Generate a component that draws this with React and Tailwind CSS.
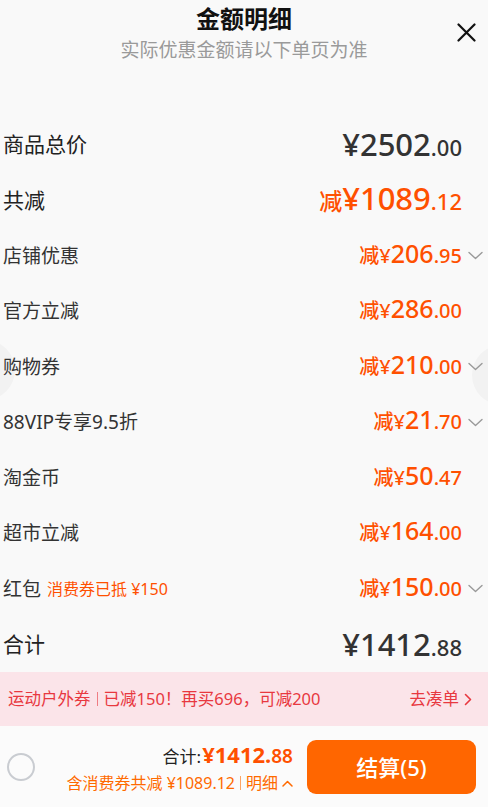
import React from "react";

const FONT = { fontFamily: '"Noto Sans", "Noto Sans CJK SC", sans-serif' };

function Chevron({ className = "" }) {
  return (
    <svg width="15" height="9" viewBox="0 0 15 9" className={className}>
      <polyline points="1,1.5 7.5,7.5 14,1.5" fill="none" stroke="#9a9a9a" strokeWidth="1.4" strokeLinecap="round" strokeLinejoin="round" />
    </svg>
  );
}

function Amount({ minus, int, dec, big, orange }) {
  const color = orange ? "text-[#ff5000]" : "text-[#333333]";
  if (big) {
    return (
      <span className={`flex items-baseline ${color}`}>
        {minus && <span className="text-[23px] font-medium">减</span>}
        <span className="text-[31px] font-medium leading-none">¥{int}</span>
        <span className="text-[22px] font-medium leading-none">.{dec}</span>
      </span>
    );
  }
  return (
    <span className={`flex items-baseline ${color}`}>
      <span className="text-[20px] font-medium">减</span>
      <span className="text-[20px] font-medium leading-none">¥</span>
      <span className="text-[25px] font-medium leading-none">{int}</span>
      <span className="text-[20px] font-medium leading-none">.{dec}</span>
    </span>
  );
}

function Row({ label, extra, amount, chevron, bigLabel }) {
  return (
    <div className="flex h-[55.5px] items-center justify-between pl-[3px]">
      <div className="flex items-center">
        <span className={bigLabel ? "text-[21px] font-normal text-[#222]" : "text-[19px] text-[#333]"}>{label}</span>
        {extra && <span className="ml-[6px] text-[16px] text-[#ff5000]">{extra}</span>}
      </div>
      <div className="flex items-center">
        {amount}
        <div className="flex w-[26px] items-center justify-center">{chevron && <Chevron />}</div>
      </div>
    </div>
  );
}

export default function App() {
  const rows = [
    ["店铺优惠", "206", "95", true],
    ["官方立减", "286", "00", false],
    ["购物券", "210", "00", true],
    ["88VIP专享9.5折", "21", "70", true],
    ["淘金币", "50", "47", false],
    ["超市立减", "164", "00", false],
  ];
  return (
    <div style={FONT} className="relative h-[807px] w-[488px] overflow-hidden bg-[#f9f9f9]">
      <div className="pointer-events-none absolute left-[-45px] top-[340px] h-[60px] w-[60px] rounded-full bg-[#f2f2f2]" />
      <div className="pointer-events-none absolute left-[472px] top-[345px] h-[60px] w-[60px] rounded-full bg-[#f2f2f2]" />

      <div className="relative flex h-[117px] flex-col items-center">
        <div className="mt-[3px] text-[24px] font-bold leading-[32px] text-[#111]">金额明细</div>
        <div className="mt-[1px] text-[19px] leading-[28px] text-[#9a9a9a]">实际优惠金额请以下单页为准</div>
        <svg className="absolute left-[457px] top-[23px]" width="19" height="19" viewBox="0 0 19 19">
          <path d="M1.5 1.5 L17.5 17.5 M17.5 1.5 L1.5 17.5" stroke="#111" strokeWidth="2.2" strokeLinecap="round" />
        </svg>
      </div>

      <div className="relative">
        <Row bigLabel label="商品总价" amount={<Amount big int="2502" dec="00" />} />
        <Row bigLabel label="共减" amount={<Amount big orange minus int="1089" dec="12" />} />
        {rows.map(([l, i, d, c]) => (
          <Row key={l} label={l} amount={<Amount orange int={i} dec={d} />} chevron={c} />
        ))}
        <Row label="红包" extra="消费券已抵 ¥150" amount={<Amount orange int="150" dec="00" />} chevron />
        <Row bigLabel label="合计" amount={<Amount big int="1412" dec="88" />} />
      </div>

      <div className="flex h-[54px] items-center justify-between bg-[#fbe4e9] pl-[8px] pr-[16px] text-[16.5px] text-[#e8383f]">
        <div className="flex items-center">
          <span>运动户外券</span>
          <span className="mx-[6px] h-[14px] w-px bg-[#e8383f] opacity-60" />
          <span>已减150！再买696，可减200</span>
        </div>
        <div className="flex items-center">
          <span>去凑单</span>
          <svg className="ml-[5px]" width="8" height="13" viewBox="0 0 8 13">
            <polyline points="1.5,1.5 6.5,6.5 1.5,11.5" fill="none" stroke="#e8383f" strokeWidth="1.6" strokeLinecap="round" strokeLinejoin="round" />
          </svg>
        </div>
      </div>

      <div className="flex h-[82px] items-center bg-[#fbfbfb] pl-[7px] pr-[12px]">
        <div className="h-[28px] w-[28px] rounded-full border-2 border-[#c9ccd1]" />
        <div className="flex flex-1 flex-col items-end pr-[14px]">
          <div className="flex items-baseline leading-none">
            <span className="text-[17px] text-[#222]">合计:</span>
            <span className="ml-[1px] text-[22px] font-bold text-[#ff5000]">¥1412.</span>
            <span className="text-[19px] font-semibold text-[#ff5000]">88</span>
          </div>
          <div className="mt-[9px] flex items-center text-[16px] leading-none text-[#ff6a00]">
            <span>含消费券共减 ¥1089.12</span>
            <span className="mx-[5px] h-[14px] w-px bg-[#ff6a00] opacity-60" />
            <span>明细</span>
            <svg className="ml-[4px]" width="11" height="7" viewBox="0 0 11 7">
              <polyline points="1,6 5.5,1.5 10,6" fill="none" stroke="#ff6a00" strokeWidth="1.5" strokeLinecap="round" strokeLinejoin="round" />
            </svg>
          </div>
        </div>
        <div className="flex h-[54px] w-[169px] items-center justify-center rounded-[9px] bg-[#ff6600] text-[22px] font-medium text-white">
          结算(5)
        </div>
      </div>
    </div>
  );
}
